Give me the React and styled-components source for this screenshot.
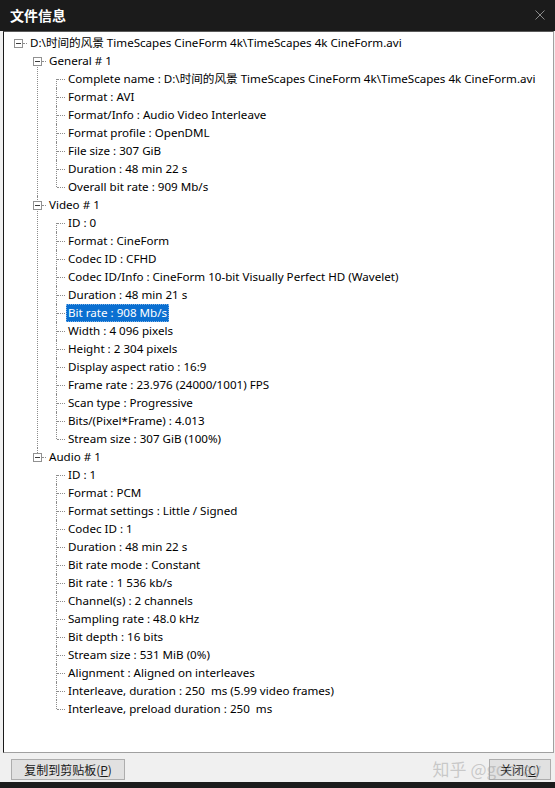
import React from 'react';
import styled, { createGlobalStyle } from 'styled-components';

const GlobalStyle = createGlobalStyle`
  html, body {
    margin: 0;
    padding: 0;
    background: #1b1b1b;
  }
  * {
    box-sizing: border-box;
  }
`;

const UI_FONT = `"Noto Sans", "Noto Sans CJK SC", sans-serif`;

const Window = styled.div`
  width: 555px;
  height: 788px;
  display: flex;
  flex-direction: column;
  background: #1b1b1b;
  font-family: ${UI_FONT};
  overflow: hidden;
`;

const TitleBar = styled.div`
  height: 31px;
  flex: none;
  display: flex;
  align-items: center;
  justify-content: space-between;
  padding: 0 6px 2px 10px;
`;

const Title = styled.span`
  color: #ffffff;
  font-family: "Noto Sans CJK SC", sans-serif;
  font-size: 14px;
  font-weight: bold;
`;

const CloseIcon = styled.svg`
  width: 10px;
  height: 10px;
  margin-right: 4px;
`;

const Body = styled.div`
  flex: 1;
  display: flex;
  flex-direction: column;
  background: #f0f0f0;
  margin-bottom: 6px;
`;

const TreePanel = styled.div`
  flex: 1;
  background: #ffffff;
  margin-left: 3px;
  margin-right: 1px;
  border-top: 1px solid #5a5a5a;
  border-left: 1px solid #1a1a1a;
  border-right: 1px solid #a0a0a0;
  border-bottom: 1px solid #a0a0a0;
  padding: 2px 0 0 4px;
  font-size: 11.6px;
  color: #000000;
`;

const TreeList = styled.ul`
  list-style: none;
  margin: 0;
  padding: 0;
  margin-left: ${(p) => (p.$nested ? '19px' : '0')};
`;

const Item = styled.li`
  position: relative;

  &::before {
    content: '';
    display: ${(p) => (p.$first && p.$last ? 'none' : 'block')};
    position: absolute;
    left: 10px;
    top: ${(p) => (p.$first ? '9px' : '0')};
    ${(p) => (p.$last ? 'height: 9px;' : 'bottom: 0;')}
    border-left: 1px dotted #8c8c8c;
  }
`;

const Row = styled.div`
  position: relative;
  height: 18px;
  display: flex;
  align-items: center;
`;

const Elbow = styled.span`
  position: relative;
  width: 19px;
  height: 18px;
  flex: none;
  display: flex;
  align-items: center;
  padding-left: 6px;

  &::after {
    content: '';
    position: absolute;
    top: 9px;
    left: ${(p) => (p.$box ? '15px' : '11px')};
    right: 0;
    border-top: 1px dotted #8c8c8c;
  }
`;

const ExpandBox = styled.span`
  position: relative;
  z-index: 1;
  width: 9px;
  height: 9px;
  margin-top: 1px;
  border: 1px solid #919191;
  background: #ffffff;
  display: flex;
  align-items: center;
  justify-content: center;

  &::after {
    content: '';
    width: 5px;
    height: 1px;
    background: #3c3c3c;
  }
`;

const Label = styled.span`
  margin-left: 1px;
  padding: 0 2px;
  height: 18px;
  line-height: 18px;
  white-space: nowrap;
  background: ${(p) => (p.$selected ? '#0a6fd1' : 'transparent')};
  color: ${(p) => (p.$selected ? '#ffffff' : '#000000')};
  outline: ${(p) => (p.$selected ? '1px dotted #7fb2e6' : 'none')};
  outline-offset: -1px;
`;

const Footer = styled.div`
  height: 29px;
  flex: none;
  display: flex;
  align-items: flex-start;
  justify-content: space-between;
  padding: 6px 4px 0 11px;
  position: relative;
`;

const Button = styled.button`
  height: 21px;
  width: ${(p) => p.$width}px;
  padding: 0;
  border: 1px solid #adadad;
  background: #e1e1e1;
  font-family: "Noto Sans CJK SC", sans-serif;
  font-size: 12px;
  color: #1a1a1a;
  line-height: 19px;
  position: relative;

  u {
    text-decoration: underline;
  }
`;

const Watermark = styled.span`
  position: absolute;
  right: 14px;
  top: 3px;
  font-family: "Noto Sans CJK SC", sans-serif;
  font-size: 17px;
  color: rgba(160, 160, 160, 0.5);
  pointer-events: none;
  white-space: nowrap;
  z-index: 2;
`;

const tree = {
  label: 'D:\\时间的风景 TimeScapes CineForm 4k\\TimeScapes 4k CineForm.avi',
  children: [
    {
      label: 'General # 1',
      children: [
        'Complete name : D:\\时间的风景 TimeScapes CineForm 4k\\TimeScapes 4k CineForm.avi',
        'Format : AVI',
        'Format/Info : Audio Video Interleave',
        'Format profile : OpenDML',
        'File size : 307 GiB',
        'Duration : 48 min 22 s',
        'Overall bit rate : 909 Mb/s',
      ],
    },
    {
      label: 'Video # 1',
      children: [
        'ID : 0',
        'Format : CineForm',
        'Codec ID : CFHD',
        'Codec ID/Info : CineForm 10-bit Visually Perfect HD (Wavelet)',
        'Duration : 48 min 21 s',
        'Bit rate : 908 Mb/s',
        'Width : 4 096 pixels',
        'Height : 2 304 pixels',
        'Display aspect ratio : 16:9',
        'Frame rate : 23.976 (24000/1001) FPS',
        'Scan type : Progressive',
        'Bits/(Pixel*Frame) : 4.013',
        'Stream size : 307 GiB (100%)',
      ],
    },
    {
      label: 'Audio # 1',
      children: [
        'ID : 1',
        'Format : PCM',
        'Format settings : Little / Signed',
        'Codec ID : 1',
        'Duration : 48 min 22 s',
        'Bit rate mode : Constant',
        'Bit rate : 1 536 kb/s',
        'Channel(s) : 2 channels',
        'Sampling rate : 48.0 kHz',
        'Bit depth : 16 bits',
        'Stream size : 531 MiB (0%)',
        'Alignment : Aligned on interleaves',
        'Interleave, duration : 250  ms (5.99 video frames)',
        'Interleave, preload duration : 250  ms',
      ],
    },
  ],
};

const SELECTED = 'Bit rate : 908 Mb/s';

const TreeNode = ({ node, first, last }) => {
  const isLeaf = typeof node === 'string';
  const label = isLeaf ? node : node.label;
  return (
    <Item $first={first} $last={last}>
      <Row>
        <Elbow $box={!isLeaf}>{!isLeaf && <ExpandBox />}</Elbow>
        <Label $selected={label === SELECTED}>{label.replace(/  /g, '\u00a0 ')}</Label>
      </Row>
      {!isLeaf && (
        <TreeList $nested>
          {node.children.map((child, i) => (
            <TreeNode
              key={i}
              node={child}
              first={i === 0}
              last={i === node.children.length - 1}
            />
          ))}
        </TreeList>
      )}
    </Item>
  );
};

const App = () => {
  return (
    <>
      <GlobalStyle />
      <Window>
        <TitleBar>
          <Title>文件信息</Title>
          <CloseIcon viewBox="0 0 10 10">
            <path d="M0.5 0.5 L9.5 9.5 M9.5 0.5 L0.5 9.5" stroke="#8a8a8a" strokeWidth="1" fill="none" />
          </CloseIcon>
        </TitleBar>
        <Body>
          <TreePanel>
            <TreeList>
              <TreeNode node={tree} first last />
            </TreeList>
          </TreePanel>
          <Footer>
            <Button $width={114}>
              复制到剪贴板(<u>P</u>)
            </Button>
            <Button $width={62}>
              关闭(<u>C</u>)
            </Button>
            <Watermark>知乎 @gooray</Watermark>
          </Footer>
        </Body>
      </Window>
    </>
  );
};

export default App;
